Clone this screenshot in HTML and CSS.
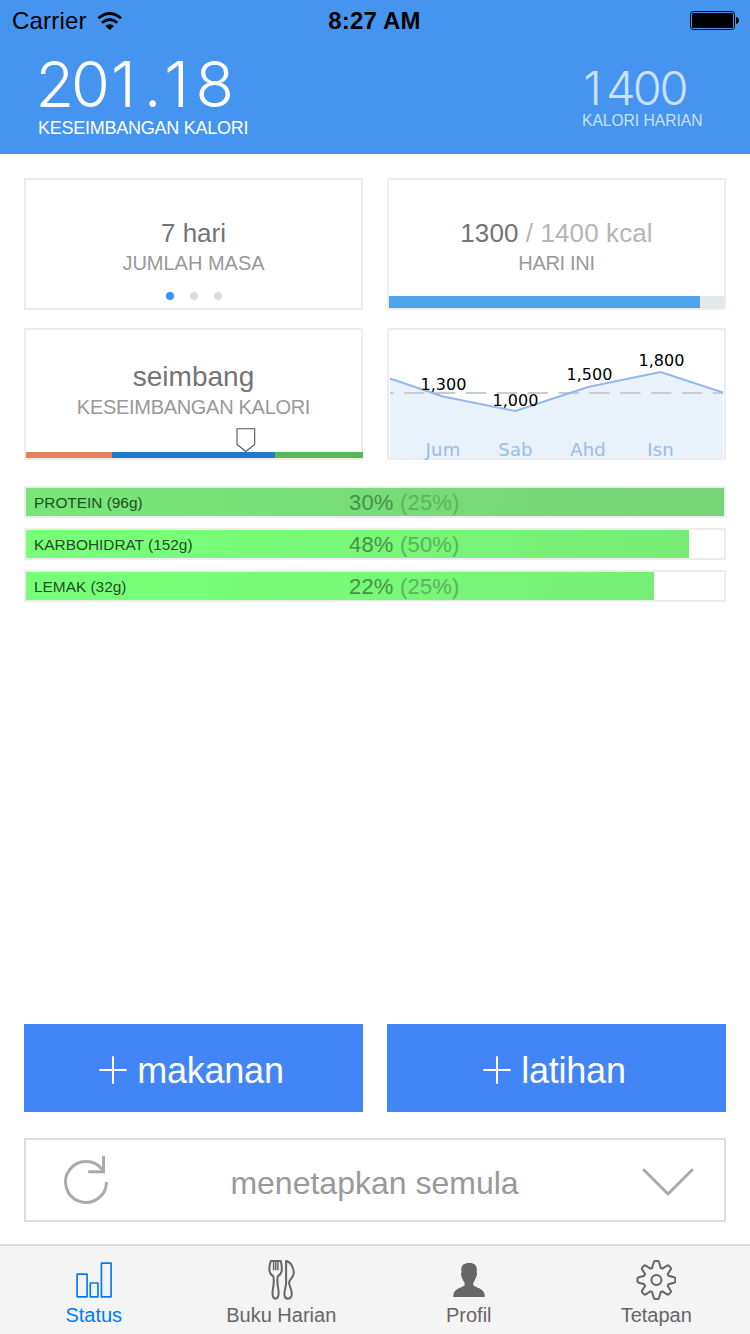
FILE: index.html
```html
<!DOCTYPE html>
<html lang="ms">
<head>
<meta charset="utf-8">
<title>Status</title>
<link rel="stylesheet" href="styles.css">
</head>
<body>
<div class="screen">
  <header class="header">
    <div class="statusbar">
      <div class="statusbar-left">
        <span class="carrier">Carrier</span>
        <svg class="wifi" viewBox="294 30 78 60" fill="none" stroke="#000" stroke-width="8">
          <path d="M298 52Q332 23 366 52"/>
          <path d="M309 65Q332 46 355 65"/>
          <path d="M319 75Q332 64 345 75L332 87Z" fill="#000" stroke="none"/>
        </svg>
      </div>
      <span class="clock">8:27 AM</span>
      <div class="statusbar-right">
        <svg class="battery" viewBox="0 0 50 20">
          <rect x="0.5" y="0.5" width="44" height="18" rx="3" fill="none" stroke="#000"/>
          <rect x="2" y="2" width="41" height="15" rx="1.5"/>
          <path d="M46 6q3 1 3 3.500t-3 3.500z"/>
        </svg>
      </div>
    </div>
    <div class="summary">
      <div class="balance">
        <div class="balance-value"><span class="digit">2</span><span class="digit">0</span><span class="digit one">1</span><span class="digit point">.</span><span class="digit one">1</span><span class="digit">8</span></div>
        <div class="balance-label">KESEIMBANGAN KALORI</div>
      </div>
      <div class="daily">
        <div class="daily-value"><span class="digit one">1</span><span class="digit">4</span><span class="digit">0</span><span class="digit">0</span></div>
        <div class="daily-label">KALORI HARIAN</div>
      </div>
    </div>
  </header>

  <main class="content">
    <section class="cards">
      <article class="card">
        <div class="card-title">7 hari</div>
        <div class="card-label">JUMLAH MASA</div>
        <div class="dots"><i class="dot dot-active"></i><i class="dot"></i><i class="dot"></i></div>
      </article>
      <article class="card">
        <div class="card-title title-today">1300<span class="muted"> / 1400 kcal</span></div>
        <div class="card-label label-today">HARI INI</div>
        <div class="progress"><div class="progress-fill"></div></div>
      </article>
      <article class="card card-balance">
        <div class="card-title title-balance">seimbang</div>
        <div class="card-label label-balance">KESEIMBANGAN KALORI</div>
        <svg class="marker" viewBox="0 0 20 25"><path d="M1 .7H18.700V16.500L9.850 23.500L1 16.500Z" fill="#fff" stroke="#555" stroke-width="1.100"/></svg>
        <div class="zones"><div class="zone zone-low"></div><div class="zone zone-mid"></div><div class="zone zone-high"></div></div>
      </article>
      <article class="card">
        <svg class="chart" viewBox="389 330 335 128">
          <path d="M390 378.500L443 396.500L515.500 411L588 387L660.500 372L723 392.500V458H390Z" fill="#e9f1fb"/>
          <path d="M390 393H723" stroke="#c8ccd2" stroke-width="2" stroke-dasharray="20.300 10.550" stroke-dashoffset="16.600"/>
          <path d="M390 378.500L443 396.500L515.500 411L588 387L660.500 372L723 392.500" fill="none" stroke="#92b9eb" stroke-width="2"/>
          <g class="chart-values">
            <text x="443.500" y="390">1,300</text>
            <text x="515.500" y="406">1,000</text>
            <text x="589.500" y="380">1,500</text>
            <text x="661.500" y="366">1,800</text>
          </g>
          <g class="chart-days">
            <text x="443" y="456">Jum</text>
            <text x="515.500" y="456">Sab</text>
            <text x="588" y="456">Ahd</text>
            <text x="660.500" y="456">Isn</text>
          </g>
        </svg>
      </article>
    </section>

    <section class="nutrients">
      <div class="nutrient">
        <div class="nutrient-fill fill-protein"></div>
        <div class="nutrient-text"><span class="nutrient-name">PROTEIN (96g)</span><span class="nutrient-pct">30% <span class="goal">(25%)</span></span></div>
      </div>
      <div class="nutrient">
        <div class="nutrient-fill fill-carb"></div>
        <div class="nutrient-text"><span class="nutrient-name">KARBOHIDRAT (152g)</span><span class="nutrient-pct">48% <span class="goal">(50%)</span></span></div>
      </div>
      <div class="nutrient">
        <div class="nutrient-fill fill-fat"></div>
        <div class="nutrient-text"><span class="nutrient-name">LEMAK (32g)</span><span class="nutrient-pct">22% <span class="goal">(25%)</span></span></div>
      </div>
    </section>

    <section class="actions">
      <button class="add"><svg class="plus" viewBox="0 0 28 28"><path d="M1 14H27M14 1V27" stroke="#fff" stroke-width="2" stroke-linecap="round"/></svg><span>makanan</span></button>
      <button class="add"><svg class="plus" viewBox="0 0 28 28"><path d="M1 14H27M14 1V27" stroke="#fff" stroke-width="2" stroke-linecap="round"/></svg><span>latihan</span></button>
    </section>

    <button class="reset">
      <svg class="reset-icon" viewBox="180 429 150 162" fill="none" stroke="#aaa" stroke-width="9">
        <path d="M319.500 516A61.500 61.500 0 1 1 308 480"/>
        <path d="M310.500 442V485H268" stroke-linecap="round"/>
      </svg>
      <span class="reset-text">menetapkan semula</span>
      <svg class="chevron" viewBox="792 456 174 108" fill="none" stroke="#aaa" stroke-width="9" stroke-linecap="round" stroke-linejoin="round"><path d="M807 480L879 552L951 480"/></svg>
    </button>
  </main>

  <nav class="tabs">
    <a class="tab tab-active">
      <svg class="tab-icon" viewBox="221.250 69 120 132" fill="none" stroke="currentColor" stroke-width="5" stroke-linejoin="round">
        <rect x="230.500" y="117.500" width="30" height="68"/><rect x="270" y="144" width="23" height="41.500"/><rect x="303.500" y="84.500" width="29" height="101"/>
      </svg>
      <span>Status</span>
    </a>
    <a class="tab">
      <svg class="tab-icon" viewBox="783.750 69 120 132" fill="none" stroke="currentColor" stroke-width="6" stroke-linejoin="round">
        <path d="M813 78H843Q847 92 846 108Q844 118 834 124Q831 140 836 165Q839 190 827 191Q816 190 819 165Q824 140 821 124Q811 118 809 108Q808 92 813 78Z"/>
        <path d="M821.500 78V106M828 78V106M834.500 78V106" stroke-width="4.500"/>
        <path d="M859 78C873 80 882 98 882 114C882 128 868 134 868 143C868 152 877 165 876 178C874 195 856 195 854 180C853 165 861 152 859 138Z"/>
      </svg>
      <span>Buku Harian</span>
    </a>
    <a class="tab">
      <svg class="tab-icon" viewBox="221.250 69 120 132" fill="currentColor">
        <path d="M281 84C296 83 305 90 305 104L304 112Q307 115 304 122Q302 128 300 132Q298 139 294 143V151C300 158 328 160 329 183Q329 186 326 186H236Q233 186 234 183C235 160 262 158 268 151V143Q264 139 262 132Q259 128 258 122Q256 115 259 112L258 104C258 90 267 84 281 84Z"/>
      </svg>
      <span>Profil</span>
    </a>
    <a class="tab">
      <svg class="tab-icon" viewBox="783.750 69 120 132" fill="none" stroke="currentColor" stroke-width="6" stroke-linejoin="round">
        <g transform="translate(845 135)">
          <circle r="15"/>
          <path d="M-13-36L-8-53Q-7-57-4-57H4Q7-57 8-53L13-36L18-34L32-43Q35-45 38-42L42-38Q45-35 43-32L34-18L36-13L53-8Q57-7 57-4V4Q57 7 53 8L36 13L34 18L43 32Q45 35 42 38L38 42Q35 45 32 43L18 34L13 36L8 53Q7 57 4 57H-4Q-7 57-8 53L-13 36L-18 34L-32 43Q-35 45-38 42L-42 38Q-45 35-43 32L-34 18L-36 13L-53 8Q-57 7-57 4V-4Q-57-7-53-8L-36-13L-34-18L-43-32Q-45-35-42-38L-38-42Q-35-45-32-43L-18-34Z"/>
        </g>
      </svg>
      <span>Tetapan</span>
    </a>
  </nav>
</div>
</body>
</html>
```
FILE: styles.css
```css
* { box-sizing: border-box; }
body { margin: 0; font-family: "Liberation Sans", Arial, sans-serif; background: #fff; }
svg { display: block; flex: none; }
button { font: inherit; border: 0; padding: 0; background: none; }
.screen { width: 750px; height: 1334px; display: flex; flex-direction: column; overflow: hidden; }

.header { height: 154px; background: #4595f0; }
.statusbar { height: 40px; display: grid; grid-template-columns: 1fr auto 1fr; align-items: center; padding: 2px 10px 0 12px; font-size: 24px; line-height: 38px; }
.statusbar-left { display: flex; align-items: center; gap: 10px; }
.carrier { letter-spacing: 0.2px; }
.wifi { width: 26px; height: 20px; }
.clock { font-weight: bold; letter-spacing: 0.2px; margin-right: 3px; }
.statusbar-right { display: flex; justify-content: flex-end; }
.battery { width: 50px; height: 20px; }
.summary { display: flex; justify-content: space-between; padding: 0 47px 0 38px; color: #fff; white-space: nowrap; }
.balance { padding-top: 12px; }
.balance-value, .daily-value { display: flex; margin-left: -1px; font-family: Inter, sans-serif; font-weight: 300; }
.balance-value { font-size: 63px; line-height: 64px; }
.digit { flex: none; width: 0.565em; display: flex; justify-content: center; }
.one { padding-right: 0.08em; }
.point { width: 0.28em; }
.balance-label { font-size: 18px; line-height: 24px; letter-spacing: -0.25px; }
.daily { width: 121px; padding-top: 23px; color: #cbe1fb; }
.daily-value { font-size: 47px; line-height: 50px; }
.daily-label { font-size: 15.6px; line-height: 16px; }

.content { flex: 1; display: flex; flex-direction: column; padding: 24px 24px 22px; }
.cards { display: grid; grid-template-columns: 339px 339px; gap: 18px 24px; }
.card { height: 132px; border: 2px solid #ededed; display: flex; flex-direction: column; text-align: center; padding-top: 37px; white-space: nowrap; }
.card-title { font-size: 26px; line-height: 32px; color: #747474; }
.card-label { font-size: 20px; line-height: 28px; color: #999; }
.title-today { letter-spacing: 0.1px; }
.label-today { letter-spacing: -0.3px; }
.title-balance { font-size: 28px; }
.label-balance { letter-spacing: -0.3px; }
.muted { color: #b5b5b5; }
.dots { display: flex; justify-content: center; gap: 16px; margin-top: 15px; }
.dot { width: 8px; height: 8px; border-radius: 50%; background: #ddd; }
.dot-active { background: #3394fb; }
.progress { height: 12px; margin-top: auto; background: #e3e8eb; }
.progress-fill { width: 311px; height: 12px; background: #4da4ea; }
.card-balance { padding-top: 31px; }
.marker { width: 20px; height: 25px; margin: 7px 0 0 210px; }
.zones { display: flex; width: 337px; height: 6px; margin-top: -1px; }
.zone-low { width: 86px; background: #e5825d; }
.zone-mid { width: 163px; background: #207ccb; }
.zone-high { width: 88px; background: #58b758; }
.card:last-child { padding-top: 0; }
.chart { width: 335px; height: 128px; overflow: visible; font-family: "DejaVu Sans", sans-serif; text-anchor: middle; }
.chart-values { font-size: 16px; fill: #000; }
.chart-days { font-size: 18px; letter-spacing: 0.2px; fill: #97bdec; }

.nutrients { display: grid; gap: 10px; margin-top: 26px; }
.nutrient { height: 32px; border: 2px solid #ededed; display: grid; }
.nutrient-fill, .nutrient-text { grid-area: 1 / 1; }
.nutrient-text { display: flex; align-items: center; padding: 2px 0 0 8px; white-space: nowrap; color: #224d24; line-height: 26px; }
.nutrient-name { width: 315px; font-size: 15.4px; }
.nutrient-pct { font-size: 22px; letter-spacing: 0.2px; color: #479147; }
.goal { color: #5cb35d; }
.fill-protein { background: linear-gradient(100deg, #78e678, #77d377); }
.fill-carb { width: 663px; background: linear-gradient(100deg, #78ff78 20%, #76ec76); }
.fill-fat { width: 628px; background: linear-gradient(100deg, #78ff78 20%, #76ee76); }

.actions { display: grid; grid-template-columns: 339px 339px; gap: 24px; margin-top: auto; }
.add { height: 88px; background: #4285f6; color: #fff; font-size: 36px; line-height: 44px; letter-spacing: -0.25px; display: flex; align-items: center; justify-content: center; gap: 10px; padding-right: 4px; }
.add span { padding-top: 5px; }
.plus { width: 28px; height: 28px; margin-top: 4px; }
.reset { height: 84px; margin-top: 26px; border: 2px solid #ddd; display: flex; align-items: center; padding: 0 27px 0 34px; }
.reset-icon { width: 50px; height: 54px; }
.reset-text { flex: 1; font-size: 32px; line-height: 40px; padding-top: 6px; color: #999; text-align: center; }
.chevron { width: 58px; height: 36px; }

.tabs { height: 90px; border-top: 2px solid #ddd; background: #f4f4f4; display: grid; grid-template-columns: repeat(4, 1fr); }
.tab { display: flex; flex-direction: column; align-items: center; padding-top: 12px; color: #666; font-size: 20px; line-height: 26px; }
.tab-active { color: #007aff; }
.tab-icon { width: 40px; height: 44px; }
```
